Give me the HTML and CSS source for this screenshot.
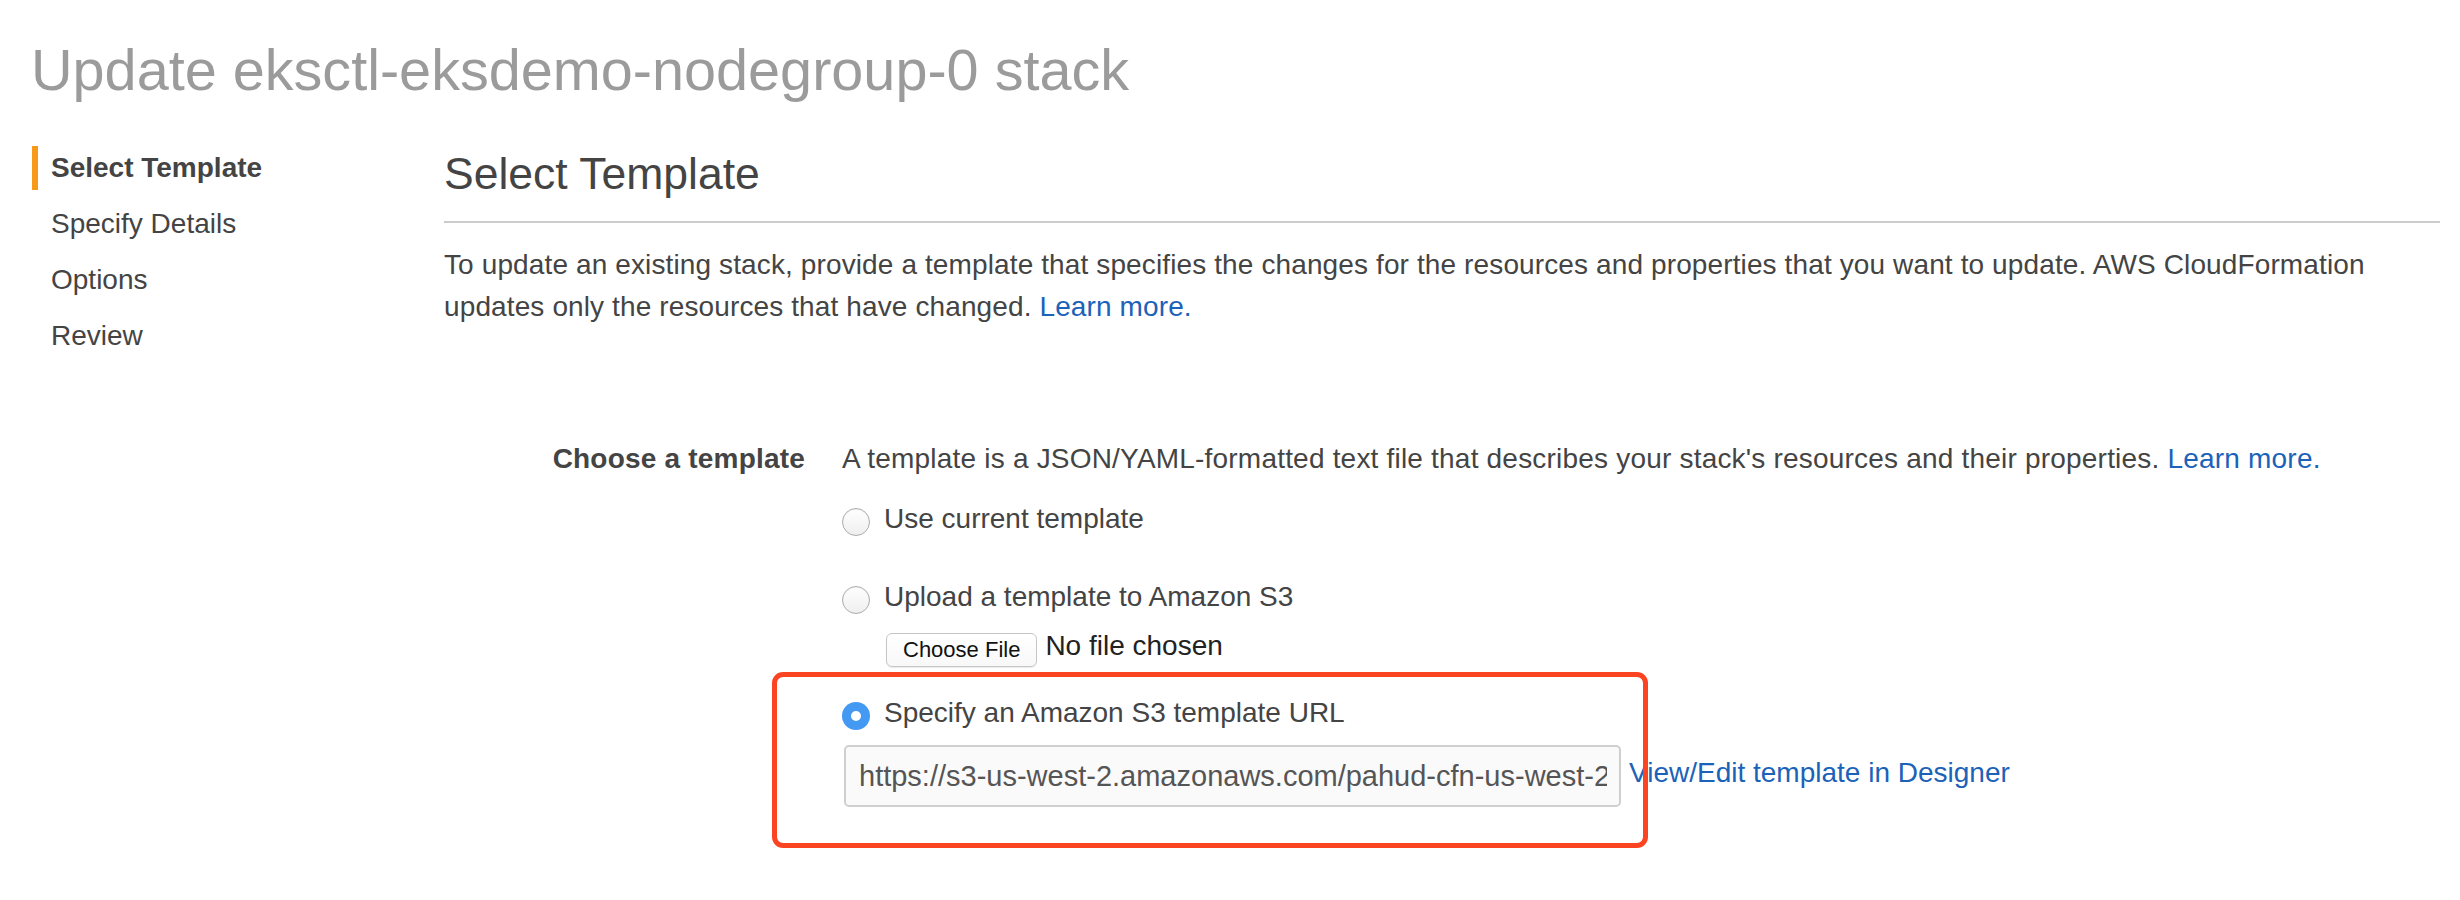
FILE: index.html
```html
<!DOCTYPE html>
<html lang="en">
<head>
<meta charset="utf-8">
<title>Update stack</title>
<link rel="stylesheet" href="styles.css">
</head>
<body>
<h1 class="page-title">Update eksctl-eksdemo-nodegroup-0 stack</h1>
<div class="layout">
  <nav class="steps">
    <div class="step active">Select Template</div>
    <div class="step">Specify Details</div>
    <div class="step">Options</div>
    <div class="step">Review</div>
  </nav>
  <main class="content">
    <h2 class="section-title">Select Template</h2>
    <p class="intro">To update an existing stack, provide a template that specifies the changes for the resources and properties that you want to update. AWS CloudFormation updates only the resources that have changed. <a class="link" href="#">Learn more.</a></p>
    <div class="field">
      <div class="field-label">Choose a template</div>
      <div class="field-body">
        <p class="field-desc">A template is a JSON/YAML-formatted text file that describes your stack's resources and their properties. <a class="link" href="#">Learn more.</a></p>
        <div class="option opt-first"><span class="radio"></span><span class="opt-text">Use current template</span></div>
        <div class="option opt-second"><span class="radio"></span><span class="opt-text">Upload a template to Amazon S3</span></div>
        <div class="file-row"><span class="file-btn">Choose File</span><span class="file-name">No file chosen</span></div>
        <div class="option opt-third"><span class="radio checked"></span><span class="opt-text">Specify an Amazon S3 template URL</span></div>
        <div class="url-row">
          <input class="url-input" type="text" value="https://s3-us-west-2.amazonaws.com/pahud-cfn-us-west-2/eks-templates/amazon-eks-nodegroup.yaml">
          <a class="link designer-link" href="#">View/Edit template in Designer</a>
        </div>
      </div>
    </div>
  </main>
</div>
<div class="highlight"></div>
</body>
</html>
```
FILE: styles.css
```css
html, body {
  margin: 0;
  padding: 0;
  background: #ffffff;
}
body {
  position: relative;
  width: 2460px;
  height: 900px;
  overflow: hidden;
  font-family: "Liberation Sans", Arial, Helvetica, sans-serif;
  color: #444444;
}
.page-title {
  margin: 0;
  padding: 36px 0 0 31px;
  font-size: 57.6px;
  line-height: 68px;
  font-weight: normal;
  color: #9b9b9b;
  white-space: nowrap;
}
.layout {
  display: flex;
  padding-left: 32px;
}
.steps {
  width: 412px;
  flex: none;
  display: flex;
  flex-direction: column;
  gap: 12px;
  padding-top: 42px;
}
.step {
  font-size: 28px;
  line-height: 44px;
  padding-left: 19px;
  color: #444444;
}
.step.active {
  border-left: 6px solid #f7991c;
  padding-left: 13px;
  font-weight: bold;
}
.content {
  width: 1996px;
  flex: none;
}
.section-title {
  margin: 44px 0 0;
  padding-bottom: 21px;
  border-bottom: 2px solid #cccccc;
  font-size: 44.5px;
  line-height: 52px;
  font-weight: normal;
  color: #444444;
}
.intro {
  margin: 21px 0 0;
  font-size: 28px;
  line-height: 42px;
  letter-spacing: 0.12px;
}
.link {
  color: #1b62b8;
  text-decoration: none;
}
.field {
  display: flex;
  margin-top: 110px;
  gap: 37px;
}
.field-label {
  width: 361px;
  flex: none;
  text-align: right;
  font-weight: bold;
  font-size: 28px;
  line-height: 42px;
  letter-spacing: 0.2px;
}
.field-body {
  display: flex;
  flex-direction: column;
  align-items: flex-start;
}
.field-desc {
  margin: 0;
  font-size: 28px;
  line-height: 42px;
  letter-spacing: 0.2px;
}
.option {
  display: flex;
  align-items: center;
  gap: 14px;
  font-size: 28px;
  line-height: 42px;
}
.opt-first { margin-top: 18px; }
.opt-second { margin-top: 36px; }
.opt-third { margin-top: 25px; }
.radio {
  width: 28px;
  height: 28px;
  box-sizing: border-box;
  border-radius: 50%;
  border: 1.5px solid #acacac;
  background: linear-gradient(#ffffff, #efefef);
  box-shadow: inset 0 1px 1px rgba(0,0,0,0.06);
  margin-top: 5px;
  flex: none;
  display: flex;
  align-items: center;
  justify-content: center;
}
.radio.checked {
  border: none;
  background: #4499f2;
  box-shadow: none;
}
.radio.checked::after {
  content: "";
  width: 10px;
  height: 10px;
  border-radius: 50%;
  background: #ffffff;
}
.file-row {
  margin-top: 15px;
  margin-left: 44px;
  display: flex;
  align-items: flex-start;
  gap: 8px;
}
.file-btn {
  display: inline-block;
  box-sizing: border-box;
  height: 34px;
  padding: 0 16px;
  font-size: 22px;
  line-height: 32px;
  color: #111111;
  background: linear-gradient(#ffffff, #f8f8f8);
  border: 1px solid #c6c6c6;
  border-radius: 6px;
  box-shadow: 0 1px 1px rgba(0,0,0,0.08);
}
.file-name {
  font-size: 28px;
  line-height: 25px;
  color: #222222;
}
.url-row {
  margin-top: 11px;
  margin-left: 2px;
  display: flex;
  align-items: center;
  gap: 8px;
}
.url-input {
  box-sizing: border-box;
  width: 777px;
  height: 62px;
  margin: 0;
  padding: 0 12px 0 13px;
  font-family: "Liberation Sans", Arial, Helvetica, sans-serif;
  font-size: 29px;
  color: #555555;
  background: #fafafa;
  border: 2px solid #cfcfcf;
  border-radius: 5px;
  outline: none;
}
.designer-link {
  font-size: 28px;
  line-height: 42px;
  margin-bottom: 6px;
}
.highlight {
  position: absolute;
  left: 772px;
  top: 672px;
  width: 876px;
  height: 176px;
  box-sizing: border-box;
  border: 5px solid #fb4522;
  border-radius: 11px;
  pointer-events: none;
}
```
